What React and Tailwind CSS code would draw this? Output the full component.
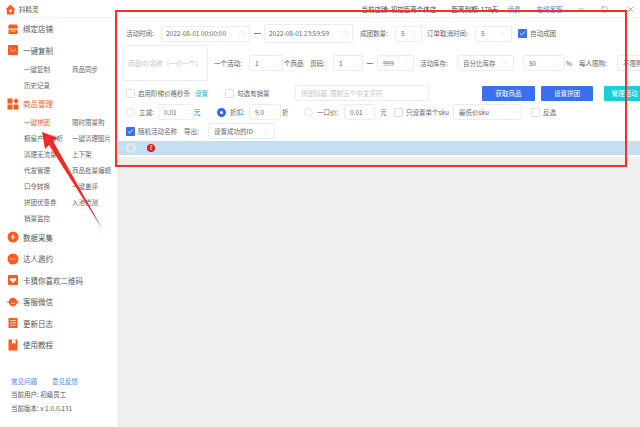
import { ChevronDown, ChevronsUpDown, Clock, Check, Minus, Square, X } from "lucide-react";

const Box = ({ className = "", children }) => (
  <div className={`flex shrink-0 items-center rounded-[2px] border border-[#ececec] bg-white text-[#666] ${className}`}>
    {children}
  </div>
);

const Stepper = ({ value, className }) => (
  <Box className={`justify-between pl-[5px] pr-[3px] h-[16px] ${className}`}>
    <span>{value}</span>
    <ChevronsUpDown size={8} strokeWidth={1} className="text-[#ccc]" />
  </Box>
);

const Picker = ({ value, className }) => (
  <Box className={`justify-between pl-[5px] pr-[3px] h-[16px] whitespace-nowrap ${className}`}>
    <span>{value}</span>
    <ChevronDown size={10} strokeWidth={1} className="text-[#ccc]" />
  </Box>
);

const TimeInput = ({ value, className }) => (
  <Box className={`justify-between pl-[4px] pr-[3px] ${className}`}>
    <span className="text-[6.5px]">{value}</span>
    <Clock size={8} strokeWidth={1} className="text-[#ccc]" />
  </Box>
);

const Tick = ({ on, className = "" }) =>
  on ? (
    <span className={`flex h-[9px] w-[9px] shrink-0 items-center justify-center rounded-[1px] bg-[#3a6ff0] ${className}`}>
      <Check size={7} strokeWidth={3} className="text-white" />
    </span>
  ) : (
    <span className={`h-[9px] w-[9px] shrink-0 rounded-[1px] border border-[#e0e0e0] bg-white ${className}`} />
  );

const Radio = ({ on }) =>
  on ? (
    <span className="h-[9px] w-[9px] shrink-0 rounded-full border-[3px] border-[#2f6bf2] bg-white" />
  ) : (
    <span className="h-[9px] w-[9px] shrink-0 rounded-full border border-[#e0e0e0] bg-white" />
  );

const Icon = ({ children }) => (
  <svg width="12" height="12" viewBox="0 0 12 12" className="mr-[4px] shrink-0">
    {children}
  </svg>
);

const OR = "#ff5a1f";

const sections = [
  {
    name: "绑定店铺",
    icon: (
      <Icon>
        <path d="M2 1.5h8L11 4.5v1H1v-1z" fill={OR} />
        <path d="M1.5 6.5h9V11h-9z" fill={OR} />
        <path d="M3.5 8h5" stroke="#fff" strokeWidth="0.7" />
      </Icon>
    ),
  },
  {
    name: "一键复制",
    icon: (
      <Icon>
        <rect x="1" y="1" width="10" height="10" rx="1" fill={OR} />
        <path d="M3.5 4.5c.3 3.6 4.7 3.6 5 0" stroke="#fff" strokeWidth="0.8" fill="none" />
      </Icon>
    ),
    subs: ["一键复制", "商品同步", "历史记录"],
  },
  {
    name: "商品管理",
    active: true,
    icon: (
      <Icon>
        <rect x="0.5" y="0.5" width="5" height="5" fill={OR} />
        <path d="M9 0.3l2.8 2.8L9 5.9 6.2 3.1z" fill={OR} />
        <rect x="0.5" y="6.5" width="5" height="5" fill={OR} />
        <rect x="6.5" y="6.5" width="5" height="5" fill={OR} />
      </Icon>
    ),
    subs: [
      "一键拼团",
      "限时限量购",
      "橱窗产品分析",
      "一键清理图片",
      "清理无流量",
      "上下架",
      "代发管理",
      "商品批量编辑",
      "口令转换",
      "一键盖评",
      "拼团优惠券",
      "入池检测",
      "销量监控",
    ],
  },
  {
    name: "数据采集",
    icon: (
      <Icon>
        <circle cx="6" cy="6" r="5.5" fill={OR} />
        <path d="M6.8 2.5L3.8 6.5h2l-.6 3 3-4h-2z" fill="#fff" />
      </Icon>
    ),
  },
  {
    name: "达人邀约",
    icon: (
      <Icon>
        <circle cx="6" cy="6" r="5.5" fill={OR} />
        <path d="M3.3 6h1M5.5 6h1M7.7 6h1" stroke="#fff" strokeWidth="1" />
      </Icon>
    ),
  },
  {
    name: "卡猜你喜欢二维码",
    icon: (
      <Icon>
        <rect x="1" y="1" width="10" height="10" rx="1" fill={OR} />
        <path d="M6 9L3 6c-1-1.6 1.6-3 3-1.2C7.400 3 10 4.400 9 6z" fill="#fff" />
      </Icon>
    ),
  },
  {
    name: "客服微信",
    icon: (
      <Icon>
        <circle cx="6" cy="6" r="4.2" fill={OR} />
        <path d="M1 7V5.500M11 7V5.500" stroke={OR} strokeWidth="1.400" />
        <path d="M4 6.800c1 1 3 1 4 0" stroke="#fff" strokeWidth="0.7" fill="none" />
      </Icon>
    ),
  },
  {
    name: "更新日志",
    icon: (
      <Icon>
        <rect x="1.500" y="1" width="9" height="10" fill={OR} />
        <path d="M3.200 3.500h5.600M3.200 5.800h5.600M3.200 8.100h5.600" stroke="#fff" strokeWidth="0.7" />
      </Icon>
    ),
  },
  {
    name: "使用教程",
    icon: (
      <Icon>
        <rect x="1.500" y="0.500" width="9" height="11" fill={OR} />
        <path d="M5 0.500h3.500v4.500L6.750 3.800 5 5z" fill="#fff" />
      </Icon>
    ),
  },
];

const Sidebar = () => (
  <div className="flex h-[409px] w-[118px] shrink-0 flex-col border-r border-[#f0f0f0] bg-white">
    {sections.map((s) => (
      <div key={s.name}>
        <div className={`flex h-[21.500px] items-center pl-[7px] text-[7.500px] ${s.active ? "text-[#ff5a1f]" : "text-[#555]"}`}>
          {s.icon}
          {s.name}
        </div>
        {s.subs && (
          <div className="grid grid-cols-[48px_1fr] pl-[24px] text-[6.500px] text-[#666]">
            {s.subs.map((t) => (
              <div key={t} className={`flex h-[16px] items-center whitespace-nowrap ${t === "一键拼团" ? "text-[#ff5a1f]" : ""}`}>
                {t}
              </div>
            ))}
          </div>
        )}
      </div>
    ))}
    <div className="mt-[20px] pl-[11px] text-[6.500px] text-[#555]">
      <div className="flex h-[12px] items-center gap-[15px] text-[#4a80f0]">
        <span>常见问题</span>
        <span>意见反馈</span>
      </div>
      <div className="flex h-[14px] items-center">当前用户: 初级员工</div>
      <div className="flex h-[13px] items-center">当前版本: v 1.0.0.131</div>
    </div>
  </div>
);

export default function App() {
  return (
    <div className="relative flex h-[427px] w-[640px] flex-col overflow-hidden bg-white font-['Noto_Sans_CJK_SC','Noto_Sans',sans-serif] text-[6.500px] leading-none text-[#666]">
      <div className="flex h-[18px] shrink-0 items-center border-b border-[#f2f2f2] pl-[5px] pt-[1px] text-[#444]">
        <svg width="11" height="11" viewBox="0 0 12 12" className="mr-[3px]">
          <path d="M6 0.500L11.500 6H10v5.500H2V6H0.500z" fill={OR} />
          <circle cx="6" cy="7.500" r="1.500" fill="#fff" />
        </svg>
        <span>抖精灵</span>
        <span className="ml-[323px] w-[90px] whitespace-nowrap">当前店铺: 初控臣育个体店</span>
        <span className="w-[56px] whitespace-nowrap">距离到期: 179天</span>
        <span className="w-[29px] text-[#4a80f0]">续费</span>
        <span className="w-[40px] text-[#4a80f0]">在线客服</span>
        <Minus size={8} strokeWidth={1.5} className="text-[#666]" />
        <Square size={7} strokeWidth={1.5} className="ml-[16px] text-[#666]" />
        <X size={9} strokeWidth={1.5} className="ml-[18px] text-[#666]" />
      </div>

      <div className="flex min-h-0 flex-1">
        <Sidebar />

        <div className="flex min-w-0 flex-1 flex-col overflow-hidden">
          <div className="mt-[6px] flex h-[19px] shrink-0 items-center pl-[8px]">
            <span className="w-[35px] shrink-0">活动时间:</span>
            <TimeInput value="2022-08-01 00:00:00" className="h-[16px] w-[89px]" />
            <span className="ml-[4px] w-[7px] shrink-0 border-t border-[#888]" />
            <TimeInput value="2022-08-01 23:59:59" className="ml-[3px] h-[19px] w-[89px]" />
            <span className="ml-[7px] w-[35px] shrink-0">成团数量:</span>
            <Stepper value="5" className="w-[27px]" />
            <span className="ml-[5px] w-[43px] shrink-0 whitespace-nowrap">订单取消时间:</span>
            <Picker value="5" className="ml-[5px] w-[37px]" />
            <Tick on className="ml-[6px]" />
            <span className="ml-[3px] shrink-0">自动成团</span>
          </div>

          <div className="mt-[2px] flex h-[36px] shrink-0 items-center pl-[5px]">
            <Box className="h-[36px] w-[85px] pl-[4px] text-[#c4c4c4]">商品ID/名称（一行一个）</Box>
            <span className="ml-[6px] w-[35px] shrink-0 text-[#555]">一个活动:</span>
            <Stepper value="1" className="w-[34px]" />
            <span className="ml-[1px] w-[26px] shrink-0 text-[#555]">个商品</span>
            <span className="w-[23px] shrink-0 text-[#555]">页码:</span>
            <Stepper value="1" className="w-[30px]" />
            <span className="mx-[4px] w-[6px] shrink-0 border-t border-[#888]" />
            <Stepper value="999" className="w-[37px]" />
            <span className="ml-[6px] w-[37px] shrink-0">活动库存:</span>
            <Picker value="百分比库存" className="w-[57px]" />
            <Stepper value="50" className="ml-[9px] w-[42px]" />
            <span className="ml-[1px] w-[13px] shrink-0">%</span>
            <span className="w-[38px] shrink-0">每人限购:</span>
            <Picker value="不限购" className="w-[40px]" />
          </div>

          <div className="mt-[4px] flex h-[16px] shrink-0 items-center pl-[8px]">
            <Tick />
            <span className="ml-[3px] w-[57px] shrink-0 whitespace-nowrap">启用阶梯价格秒杀</span>
            <span className="w-[30px] shrink-0 text-[#2aa7b8]">设置</span>
            <Tick />
            <span className="ml-[3px] w-[58px] shrink-0">勾选有销量</span>
            <Box className="h-[16px] w-[134px] pl-[5px] text-[#c4c4c4]">拼团标题, 限制五个中文字符</Box>
            <button className="ml-[53px] h-[15px] w-[53px] shrink-0 rounded-[1px] bg-[#3a6ff0] text-white">获取商品</button>
            <button className="ml-[6px] h-[15px] w-[52px] shrink-0 rounded-[1px] bg-[#3a6ff0] text-white">设置拼团</button>
            <button className="ml-[11px] h-[15px] w-[38px] shrink-0 rounded-[1px] bg-[#16d0de] pl-[3px] text-white">管理活动</button>
          </div>

          <div className="mt-[3px] flex h-[16px] shrink-0 items-center pl-[8px]">
            <Radio />
            <span className="ml-[4px] w-[19px] shrink-0">立减:</span>
            <Stepper value="0.01" className="w-[36px]" />
            <span className="w-[23px] shrink-0">元</span>
            <Radio on />
            <span className="ml-[4px] w-[19px] shrink-0">折扣:</span>
            <Stepper value="9.0" className="w-[32px]" />
            <span className="ml-[1px] w-[22px] shrink-0">折</span>
            <Radio />
            <span className="ml-[4px] w-[27px] shrink-0">一口价:</span>
            <Stepper value="0.01" className="w-[31px]" />
            <span className="ml-[5px] w-[14px] shrink-0">元</span>
            <Tick />
            <span className="ml-[3px] w-[47px] shrink-0 whitespace-nowrap">只设置单个sku</span>
            <Picker value="最低价sku" className="w-[69px]" />
            <Tick className="ml-[9px]" />
            <span className="ml-[3px] shrink-0">反选</span>
          </div>

          <div className="mt-[3px] flex h-[16px] shrink-0 items-center pl-[8px]">
            <Tick on />
            <span className="ml-[3px] w-[46px] shrink-0 whitespace-nowrap">随机活动名称</span>
            <span className="w-[24px] shrink-0">导出:</span>
            <Picker value="设置成功的ID" className="w-[67px]" />
          </div>

          <div className="mt-[2px] flex h-[14px] shrink-0 items-center bg-[#c5dff2] pl-[8px]">
            <span className="h-[10px] w-[10px] shrink-0 rounded-full border-2 border-[#e4e8ea] bg-[#c5dff2]" />
            <span className="ml-[11px] flex h-[8px] w-[8px] shrink-0 items-center justify-center rounded-full bg-[#e0200f] text-[6px] font-bold text-white">?</span>
          </div>

          <div className="mt-[2px] min-h-0 flex-1 bg-[#efefef]" />
        </div>
      </div>

      {/* red markup drawn over the screenshot */}
      <div className="pointer-events-none absolute left-[115px] top-[10px] h-[157px] w-[512px] border-2 border-[#f9302a]" />
      <svg className="pointer-events-none absolute left-0 top-0" width="640" height="427">
        <polygon points="42,132 58,138 53,141 103,230 49,145 45,149" fill="#f02a24" />
      </svg>
    </div>
  );
}
